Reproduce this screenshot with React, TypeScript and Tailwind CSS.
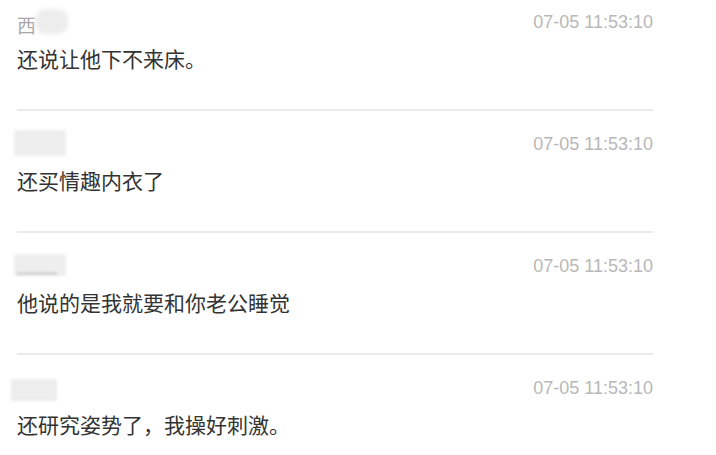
import React from "react";

const rows = [
  { text: "还说让他下不来床。", name: 1 },
  { text: "还买情趣内衣了", name: 2 },
  { text: "他说的是我就要和你老公睡觉", name: 3 },
  { text: "还研究姿势了，我操好刺激。", name: 4 },
];

function Name({ kind }: { kind: number }) {
  if (kind === 1) {
    return (
      <div className="relative flex h-[26px] w-[55px] items-center">
        <span
          className="mt-[5px] text-[19px] leading-none text-[#a8a8a8]"
          style={{ fontFamily: '"Noto Sans CJK SC", sans-serif' }}
        >
          西
        </span>
        <div className="absolute left-[18px] top-[0px] h-[25px] w-[33px] rounded-[10px] bg-[#ededed] blur-[2px]" />
      </div>
    );
  }
  if (kind === 3) {
    return (
      <div className="relative h-[26px] w-[55px]">
        <div className="absolute left-[-3px] top-[1px] h-[22px] w-[52px] bg-[#eeeeee] blur-[1.5px]" />
        <div className="absolute left-[0px] top-[19px] h-[3px] w-[40px] bg-[#d6d6d6] blur-[1px]" />
      </div>
    );
  }
  if (kind === 4) {
    return (
      <div className="relative h-[26px] w-[55px]">
        <div className="absolute left-[-6px] top-[4px] h-[22px] w-[46px] bg-[#ededed] blur-[1.5px]" />
      </div>
    );
  }
  return (
    <div className="relative h-[26px] w-[55px]">
      <div className="absolute left-[-3px] top-[-1px] h-[26px] w-[52px] bg-[#eeeeee] blur-[1.5px]" />
    </div>
  );
}

export default function App() {
  return (
    <div className="h-[455px] w-[716px] overflow-hidden bg-white">
      <div className="ml-[17px] w-[636px]">
        {rows.map((r, i) => (
          <div key={i} className="flex flex-col">
            <div className="mt-[9px] flex h-[26px] items-center justify-between">
              <Name kind={r.name} />
              <span
                className="text-[18px] leading-[26px] text-[#b8b8b8]"
                style={{ fontFamily: '"Liberation Sans", Arial, sans-serif' }}
              >
                07-05 11:53:10
              </span>
            </div>
            <div
              className="mt-[9px] h-[28px] text-[21px] leading-[28px] text-[#333333]"
              style={{ fontFamily: '"Noto Sans CJK SC", sans-serif' }}
            >
              {r.text}
            </div>
            {i < rows.length - 1 ? (
              <div className="mb-[11px] mt-[37px] h-[2px] bg-[#ebebeb]" />
            ) : null}
          </div>
        ))}
      </div>
    </div>
  );
}
